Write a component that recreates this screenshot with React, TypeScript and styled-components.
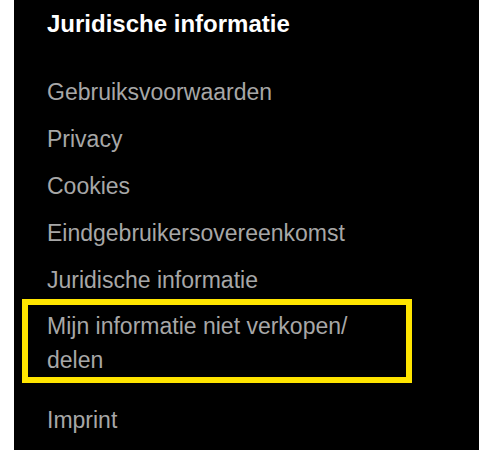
import React from "react";
import styled, { createGlobalStyle } from "styled-components";

const GlobalStyle = createGlobalStyle`
  html, body {
    margin: 0;
    padding: 0;
    background: #ffffff;
  }
  body {
    font-family: "Liberation Sans", Arial, sans-serif;
  }
`;

const Page = styled.div`
  display: flex;
  min-height: 450px;
  padding-left: 14px;
  background: #ffffff;
`;

const Panel = styled.nav`
  flex: 1;
  background: #000000;
  min-height: 450px;
  padding: 8px 0 0 33px;
  box-sizing: border-box;
`;

const Heading = styled.h2`
  margin: 0;
  font-size: 24px;
  line-height: 32px;
  font-weight: 700;
  color: #ffffff;
`;

const List = styled.ul`
  list-style: none;
  margin: 35px 0 0;
  padding: 0;
  display: flex;
  flex-direction: column;
  gap: 13px;
  width: 359px;
`;

const Item = styled.li<{ $highlight?: boolean }>`
  font-size: 23px;
  line-height: 34px;
  color: #a7a7a7;
  ${(p) =>
    p.$highlight &&
    `
    border: 6px solid #ffe500;
    padding: 4px 12px 0 19px;
    margin: -11px -6px 7px -25px;
  `}
`;

const Link = styled.a`
  color: inherit;
  text-decoration: none;
`;

const items = [
  "Gebruiksvoorwaarden",
  "Privacy",
  "Cookies",
  "Eindgebruikersovereenkomst",
  "Juridische informatie",
];

export default function App() {
  return (
    <>
      <GlobalStyle />
      <Page>
        <Panel>
          <Heading>Juridische informatie</Heading>
          <List>
            {items.map((t) => (
              <Item key={t}>
                <Link href="#">{t}</Link>
              </Item>
            ))}
            <Item $highlight>
              <Link href="#">
                Mijn informatie niet verkopen/<wbr />delen
              </Link>
            </Item>
            <Item>
              <Link href="#">Imprint</Link>
            </Item>
          </List>
        </Panel>
      </Page>
    </>
  );
}
